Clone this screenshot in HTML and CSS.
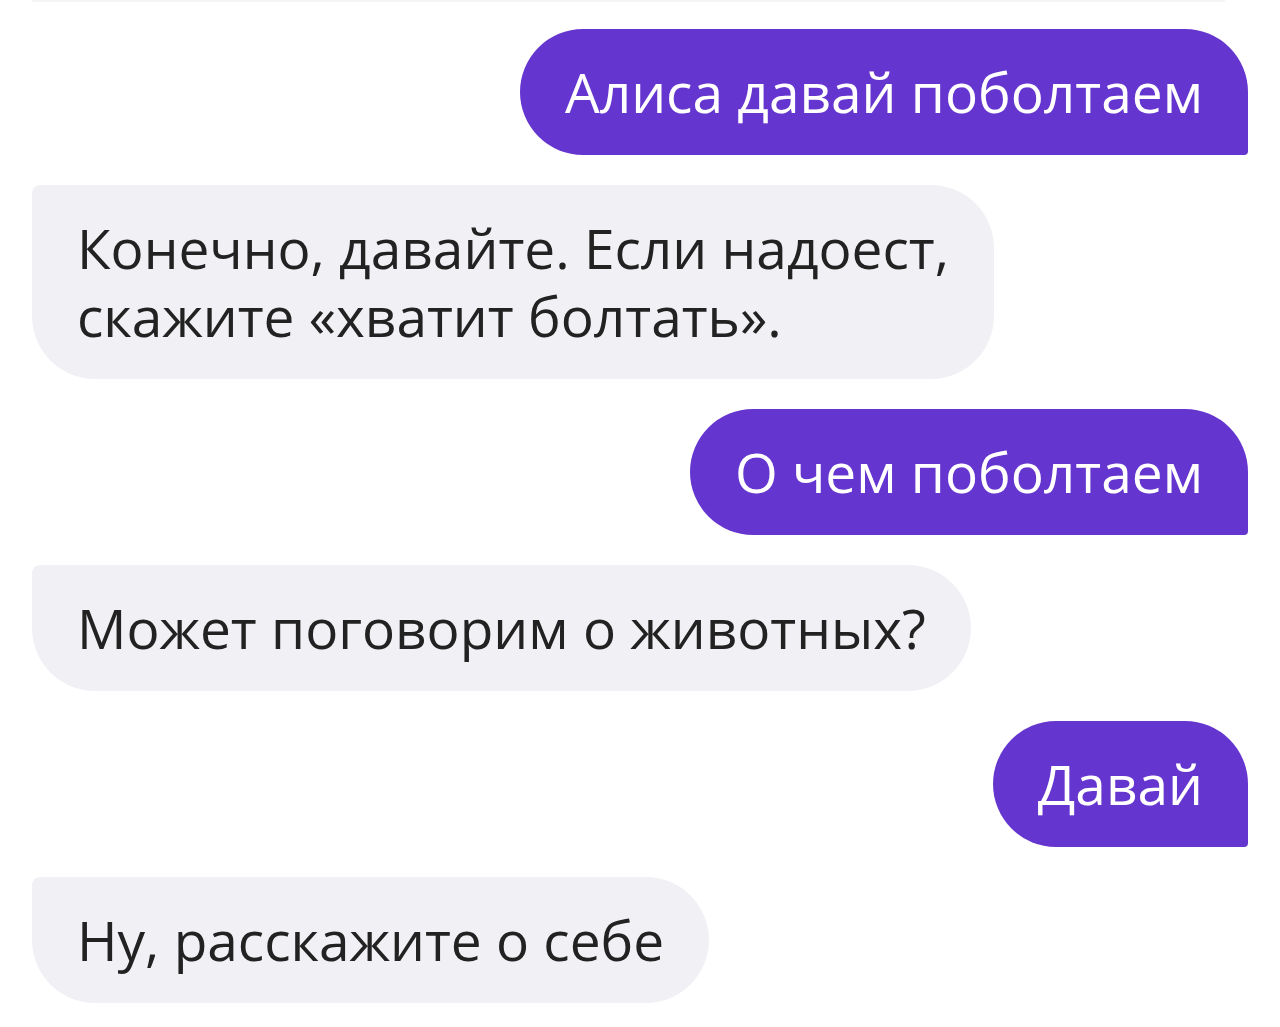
FILE: index.html
```html
<!DOCTYPE html>
<html lang="ru">
<head>
    <meta charset="UTF-8">
    <meta name="viewport" content="width=device-width, initial-scale=1.0">
    <title>Алиса</title>
    <link rel="stylesheet" href="styles.css">
</head>
<body>
    <div class="chat">
        <div class="prev-edge"></div>
        <div class="msg user">Алиса давай поболтаем</div>
        <div class="msg bot">Конечно, давайте. Если надоест,<br>скажите «хватит болтать».</div>
        <div class="msg user">О чем поболтаем</div>
        <div class="msg bot">Может поговорим о животных?</div>
        <div class="msg user">Давай</div>
        <div class="msg bot">Ну, расскажите о себе</div>
    </div>
</body>
</html>
```
FILE: styles.css
```css
body {
    margin: 0;
    padding: 0;
    background: #fff;
    font-family: "Open Sans", "Noto Sans", sans-serif;
}
.chat {
    display: flex;
    flex-direction: column;
    gap: 30px;
    padding: 0 32px;
}
.prev-edge {
    align-self: flex-start;
    width: 1193px;
    height: 2px;
    margin-bottom: -3px;
    background: #f5f5f7;
}
.msg {
    font-size: 55px;
    line-height: 68px;
    padding: 29px 45px;
    border-radius: 63px;
    white-space: nowrap;
    letter-spacing: 0;
}
.user {
    align-self: flex-end;
    background: #6535cf;
    color: #fff;
    border-bottom-right-radius: 4px;
}
.bot {
    align-self: flex-start;
    background: #f1f1f5;
    color: #222;
    border-top-left-radius: 8px;
}
```
